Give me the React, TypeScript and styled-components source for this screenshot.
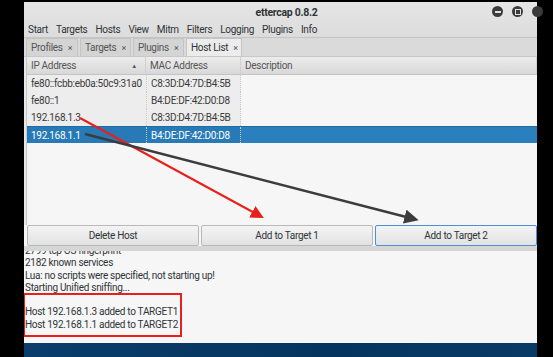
import React from 'react'
import styled, { createGlobalStyle } from 'styled-components'

const Global = createGlobalStyle`
html, body { margin: 0; padding: 0; background: #000; }
body { font-family: Roboto, "Noto Sans", sans-serif; letter-spacing: -0.3px; }
`

const hosts = [
  { ip: 'fe80::fcbb:eb0a:50c9:31a0', mac: 'C8:3D:D4:7D:B4:5B' },
  { ip: 'fe80::1', mac: 'B4:DE:DF:42:D0:D8' },
  { ip: '192.168.1.3', mac: 'C8:3D:D4:7D:B4:5B' },
  { ip: '192.168.1.1', mac: 'B4:DE:DF:42:D0:D8', selected: true },
]

const menus = ['Start', 'Targets', 'Hosts', 'View', 'Mitm', 'Filters', 'Logging', 'Plugins', 'Info']
const tabs = [
  { label: 'Profiles', w: 52 },
  { label: 'Targets', w: 51 },
  { label: 'Plugins', w: 51 },
  { label: 'Host List', w: 56, active: true },
]

const App = () => {
  return (
    <Page>
      <Global />
      <Screen>
        <Window>
          <Header>
            <TitleRow>
              <Title>ettercap 0.8.2</Title>
              <WinButtons>
                <WinBtn><Minus /></WinBtn>
                <WinBtn><Square /></WinBtn>
                <WinBtn />
              </WinButtons>
            </TitleRow>
            <MenuBar>
              {menus.map(m => <MenuItem key={m}>{m}</MenuItem>)}
            </MenuBar>
          </Header>
          <TabBar>
            {tabs.map(t => (
              <Tab key={t.label} $active={t.active} $w={t.w}>
                {t.label}<Close>×</Close>
              </Tab>
            ))}
          </TabBar>
          <Body>
            <TableArea>
              <HeadRow>
                <HeadCell $w={119}>IP Address<Sort>▲</Sort></HeadCell>
                <HeadCell $w={95}>MAC Address</HeadCell>
                <HeadCell $w={0}>Description</HeadCell>
              </HeadRow>
              {hosts.map(h => (
                <Row key={h.ip} $selected={h.selected}>
                  <Cell $w={119}>{h.ip}</Cell>
                  <Cell $w={95} $dotted>{h.mac}</Cell>
                  <Cell $w={0} $plain />
                </Row>
              ))}
            </TableArea>
            <ButtonRow>
              <Button $w={172}>Delete Host</Button>
              <Button $w={172}>Add to Target 1</Button>
              <Button $w={0} $focus>Add to Target 2</Button>
            </ButtonRow>
            <Handle />
            <Log>
              <LogLines>
                <LogLine>2799 tcp OS fingerprint</LogLine>
                <LogLine>2182 known services</LogLine>
                <LogLine>Lua: no scripts were specified, not starting up!</LogLine>
                <LogLine>Starting Unified sniffing...</LogLine>
                <LogLine>&nbsp;</LogLine>
                <LogLine>Host 192.168.1.3 added to TARGET1</LogLine>
                <LogLine>Host 192.168.1.1 added to TARGET2</LogLine>
              </LogLines>
              <Highlight />
            </Log>
          </Body>
        </Window>
        <Desktop />
        <Arrows width="513" height="357" viewBox="0 0 513 357">
          <defs>
            <marker id="ar" markerWidth="6" markerHeight="6" refX="4" refY="3" orient="auto" markerUnits="strokeWidth">
              <path d="M0,0 L6,3 L0,6 Z" fill="#e8201c" />
            </marker>
            <marker id="ag" markerWidth="6" markerHeight="6" refX="4" refY="3" orient="auto" markerUnits="strokeWidth">
              <path d="M0,0 L6,3 L0,6 Z" fill="#3c3c3c" />
            </marker>
          </defs>
          <line x1="56" y1="118" x2="236" y2="216" stroke="#e8201c" strokeWidth="2.2" markerEnd="url(#ar)" />
          <line x1="61" y1="134" x2="390" y2="219" stroke="#3c3c3c" strokeWidth="2.4" markerEnd="url(#ag)" />
        </Arrows>
      </Screen>
    </Page>
  )
}

export default App

const Page = styled.div`
width: 553px;
height: 357px;
box-sizing: border-box;
padding: 2px 16px 0 24px;
overflow: hidden;
`
const Screen = styled.div`
position: relative;
width: 513px;
height: 355px;
display: flex;
flex-direction: column;
`
const Window = styled.div`
height: 341px;
display: flex;
flex-direction: column;
background: #e8e8e8;
color: #2e3436;
font-size: 10px;
`
const Header = styled.div`
height: 36px;
background: linear-gradient(#e6e6e6, #dcdcdc);
border-bottom: 1px solid #c4c4c4;
box-sizing: border-box;
`
const TitleRow = styled.div`
height: 20px;
position: relative;
display: flex;
align-items: center;
justify-content: center;
`
const Title = styled.div`
font-weight: bold;
font-size: 10.5px;
color: #2e3436;
margin-left: 12px;
`
const WinButtons = styled.div`
position: absolute;
right: -6px;
top: 4px;
display: flex;
gap: 9px;
`
const WinBtn = styled.div`
width: 11px;
height: 11px;
border-radius: 50%;
background: #3b3b3b;
display: flex;
align-items: center;
justify-content: center;
`
const Minus = styled.div`
width: 6px;
height: 2px;
background: #e0e0e0;
`
const Square = styled.div`
width: 4px;
height: 4px;
border: 1px solid #e0e0e0;
`
const MenuBar = styled.div`
height: 15px;
display: flex;
align-items: center;
padding-left: 4px;
gap: 8px;
`
const MenuItem = styled.span`
color: #2e3436;
`
const TabBar = styled.div`
height: 19px;
display: flex;
align-items: flex-end;
gap: 2px;
padding-left: 2px;
background: #dadada;
border-bottom: 1px solid #c8c8c8;
box-sizing: border-box;
`
const Tab = styled.div<{ $active?: boolean; $w: number }>`
width: ${p => p.$w}px;
height: 18px;
box-sizing: border-box;
display: flex;
align-items: center;
padding-left: 4px;
white-space: nowrap;
background: ${p => (p.$active ? '#ececec' : '#d4d4d4')};
border: 1px solid #c4c4c4;
border-bottom: none;
color: ${p => (p.$active ? '#2e3436' : '#555')};
`
const Close = styled.span`
font-size: 9px;
margin-left: 5px;
color: #555;
`
const Body = styled.div`
flex: 1;
display: flex;
flex-direction: column;
min-height: 0;
`
const TableArea = styled.div`
height: 168px;
background: #f6f6f6;
border-left: 1px solid #c8c8c8;
margin: 0 0 0 2px;
`
const HeadRow = styled.div`
height: 18px;
display: flex;
background: linear-gradient(#ececec, #d8d8d8);
border-bottom: 1px solid #c4c4c4;
box-sizing: border-box;
`
const HeadCell = styled.div<{ $w: number }>`
${p => (p.$w ? `width: ${p.$w}px;` : 'flex: 1;')}
display: flex;
align-items: center;
padding-left: 4px;
box-sizing: border-box;
border-right: 1px solid #d0d0d0;
color: #555;
position: relative;
`
const Sort = styled.span`
position: absolute;
right: 8px;
font-size: 6px;
color: #555;
`
const Row = styled.div<{ $selected?: boolean }>`
height: 17px;
display: flex;
background: ${p => (p.$selected ? '#2a7fbd' : 'transparent')};
color: ${p => (p.$selected ? '#fff' : '#3a3a3a')};
border-top: ${p => (p.$selected ? '1px solid #1f6aa3' : 'none')};
box-sizing: border-box;
`
const Cell = styled.div<{ $w: number; $dotted?: boolean; $plain?: boolean }>`
${p => (p.$w ? `width: ${p.$w}px;` : 'flex: 1;')}
display: flex;
align-items: center;
padding-left: 4px;
box-sizing: border-box;
white-space: nowrap;
background: ${p => (p.$plain ? 'transparent' : 'rgba(0,0,0,0.035)')};
border-left: ${p => (p.$dotted ? '1px dotted #c8c8c8' : 'none')};
border-right: ${p => (p.$dotted ? '1px dotted #c8c8c8' : 'none')};
`
const ButtonRow = styled.div`
height: 21px;
display: flex;
gap: 2px;
padding-left: 3px;
background: #f6f6f6;
`
const Button = styled.div<{ $w: number; $focus?: boolean }>`
${p => (p.$w ? `width: ${p.$w}px;` : 'flex: 1;')}
display: flex;
align-items: center;
justify-content: center;
box-sizing: border-box;
border: 1px solid ${p => (p.$focus ? '#4a90d9' : '#b8b8b8')};
border-radius: 2px;
background: linear-gradient(#f4f4f4, #e2e2e2);
color: #2e3436;
`
const Handle = styled.div`
height: 5px;
background: #d6d6d6;
`
const Log = styled.div`
flex: 1;
background: #f6f6f6;
position: relative;
overflow: hidden;
`
const LogLines = styled.div`
margin-top: -6px;
padding-left: 1px;
display: flex;
flex-direction: column;
`
const LogLine = styled.div`
height: 12.3px;
line-height: 12.3px;
white-space: nowrap;
color: #2e3436;
`
const Highlight = styled.div`
position: absolute;
left: -1px;
top: 42px;
width: 159px;
height: 44px;
box-sizing: border-box;
border: 2px solid #e8201c;
`
const Desktop = styled.div`
flex: 1;
background: linear-gradient(90deg, #0a3d6b, #05355f 60%, #083a66);
`
const Arrows = styled.svg`
position: absolute;
left: 0;
top: -2px;
pointer-events: none;
`
